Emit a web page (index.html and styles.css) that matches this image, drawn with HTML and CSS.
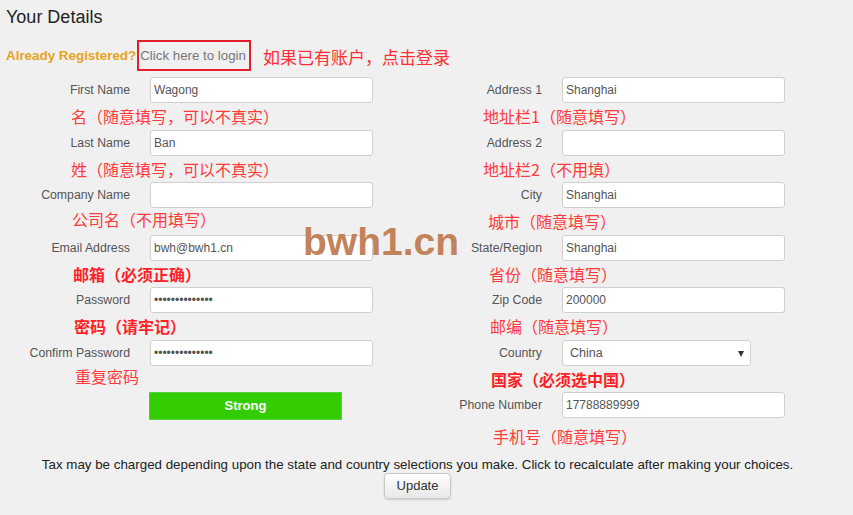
FILE: index.html
```html
<!DOCTYPE html>
<html lang="en">
<head>
<meta charset="utf-8">
<title>Your Details</title>
<link rel="stylesheet" href="styles.css">
</head>
<body>
<div class="page">
  <h1 class="title">Your Details</h1>
  <div class="login-line">
    <span class="already">Already Registered?</span>
    <a class="login-link" href="#">Click here to login</a>
    <span class="note-top">如果已有账户，点击登录</span>
  </div>
  <div class="cols">
    <div class="col">
      <div class="field"><label>First Name</label><input class="inp" type="text" value="Wagong"></div>
      <div class="note">名（随意填写，可以不真实）</div>
      <div class="field"><label>Last Name</label><input class="inp" type="text" value="Ban"></div>
      <div class="note">姓（随意填写，可以不真实）</div>
      <div class="field"><label>Company Name</label><input class="inp" type="text" value=""></div>
      <div class="note up2">公司名（不用填写）</div>
      <div class="field"><label>Email Address</label><input class="inp" type="text" value="bwh@bwh1.cn"></div>
      <div class="note bold l2">邮箱（必须正确）</div>
      <div class="field"><label>Password</label><input class="inp" type="text" value="••••••••••••••"></div>
      <div class="note bold l3">密码（请牢记）</div>
      <div class="field"><label>Confirm Password</label><input class="inp" type="text" value="••••••••••••••"></div>
      <div class="note up">重复密码</div>
      <div class="field tall"><span></span><div class="strength">Strong</div></div>
    </div>
    <div class="col">
      <div class="field"><label>Address 1</label><input class="inp" type="text" value="Shanghai"></div>
      <div class="note">地址栏1（随意填写）</div>
      <div class="field"><label>Address 2</label><input class="inp" type="text" value=""></div>
      <div class="note">地址栏2（不用填）</div>
      <div class="field"><label>City</label><input class="inp" type="text" value="Shanghai"></div>
      <div class="note s1">城市（随意填写）</div>
      <div class="field"><label>State/Region</label><input class="inp" type="text" value="Shanghai"></div>
      <div class="note s2">省份（随意填写）</div>
      <div class="field"><label>Zip Code</label><input class="inp" type="text" value="200000"></div>
      <div class="note s3">邮编（随意填写）</div>
      <div class="field"><label>Country</label><div class="select">China<span class="arrow"></span></div></div>
      <div class="note bold s4">国家（必须选中国）</div>
      <div class="field"><label>Phone Number</label><input class="inp" type="text" value="17788889999"></div>
      <div class="note s5 down">手机号（随意填写）</div>
    </div>
  </div>
  <p class="tax">Tax may be charged depending upon the state and country selections you make. Click to recalculate after making your choices.</p>
  <div class="update-wrap"><button class="update" type="button">Update</button></div>
  <div class="watermark">bwh1.cn</div>
</div>
</body>
</html>
```
FILE: styles.css
```css
html, body {
  margin: 0;
  padding: 0;
  background: #f0f0f0;
}
body {
  font-family: "Liberation Sans", Arial, "Noto Sans CJK SC", sans-serif;
  color: #333;
}
.page {
  position: relative;
  width: 853px;
  height: 515px;
  overflow: hidden;
}
.title {
  margin: 0;
  padding: 6px 0 0 6px;
  font-size: 18px;
  line-height: 22px;
  font-weight: normal;
  color: #222;
}
.login-line {
  margin-top: 12px;
  height: 31px;
  display: flex;
  align-items: center;
  padding-left: 6px;
}
.already {
  font-size: 13.4px;
  font-weight: bold;
  color: #e8a31c;
  margin-right: 1px;
}
.login-link {
  box-sizing: border-box;
  height: 31px;
  display: inline-flex;
  align-items: center;
  padding: 0 3px 0 1px;
  border: 2px solid #e3202a;
  font-size: 13.3px;
  color: #777;
  text-decoration: none;
}
.note-top {
  margin-left: 12px;
  font-family: "Noto Sans CJK SC", sans-serif;
  font-size: 17px;
  color: #ff2e35;
  position: relative;
  top: 1px;
}
.cols {
  margin-top: 6px;
  display: grid;
  grid-template-columns: 373px 373px;
  column-gap: 39px;
}
.col {
  display: flex;
  flex-direction: column;
}
.field {
  display: grid;
  grid-template-columns: 130px 223px;
  column-gap: 20px;
  align-items: center;
  height: 26px;
}
.field.tall {
  height: 28px;
}
.field label {
  text-align: right;
  font-size: 12.3px;
  color: #555;
  white-space: nowrap;
}
.inp {
  box-sizing: border-box;
  width: 223px;
  height: 26px;
  margin: 0;
  padding: 0 3px;
  border: 1px solid #d0d0d0;
  border-radius: 3px;
  background: #fff;
  font-family: "Liberation Sans", Arial, sans-serif;
  font-size: 12px;
  color: #555;
  outline: none;
}
.select {
  box-sizing: border-box;
  position: relative;
  width: 189px;
  height: 26px;
  padding: 0 0 0 7px;
  border: 1px solid #d0d0d0;
  border-radius: 3px;
  background: #fff;
  font-size: 12.5px;
  color: #555;
  line-height: 24px;
}
.arrow {
  position: absolute;
  right: 6px;
  top: 10px;
  width: 0;
  height: 0;
  border-left: 3.5px solid transparent;
  border-right: 3.5px solid transparent;
  border-top: 6px solid #333;
}
.note {
  height: 26.5px;
  line-height: 26.5px;
  padding-left: 71px;
  font-family: "Noto Sans CJK SC", sans-serif;
  font-size: 16px;
  color: #ff3a3a;
  white-space: nowrap;
}
.note.bold {
  font-weight: bold;
  color: #ff1f26;
}
.note.up {
  line-height: 21px;
  padding-left: 75px;
}
.note.up2 {
  line-height: 23px;
  padding-left: 72px;
}
.note.l2 { padding-left: 73px; }
.note.l3 { padding-left: 74px; }
.note.s1 { padding-left: 76px; }
.note.s2 { padding-left: 77px; }
.note.s3 { padding-left: 78px; }
.note.s4 { padding-left: 79px; }
.note.s5 { padding-left: 81px; }
.note.down {
  padding-top: 5px;
}
.strength {
  box-sizing: border-box;
  width: 193px;
  height: 28px;
  margin-left: -1px;
  background: #33cc00;
  border: 1px solid #55d044;
  color: #fff;
  font-size: 13px;
  font-weight: bold;
  text-align: center;
  line-height: 26px;
}
.tax {
  width: 835px;
  margin: 7px 0 0 0;
  font-size: 13.35px;
  line-height: 16px;
  text-align: center;
  color: #222;
}
.update-wrap {
  width: 835px;
  display: flex;
  justify-content: center;
}
.update {
  width: 67px;
  height: 26px;
  padding: 0;
  border: 1px solid #c8c8c8;
  border-radius: 4px;
  background: linear-gradient(#ffffff, #e8e8e8);
  box-shadow: 0 1px 2px rgba(0, 0, 0, 0.15);
  font-family: "Liberation Sans", Arial, sans-serif;
  font-size: 13px;
  color: #333;
}
.watermark {
  position: absolute;
  left: 303px;
  top: 219px;
  font-family: "Liberation Sans", Arial, sans-serif;
  font-size: 39px;
  font-weight: bold;
  line-height: 46px;
  color: #c3835a;
}
```
